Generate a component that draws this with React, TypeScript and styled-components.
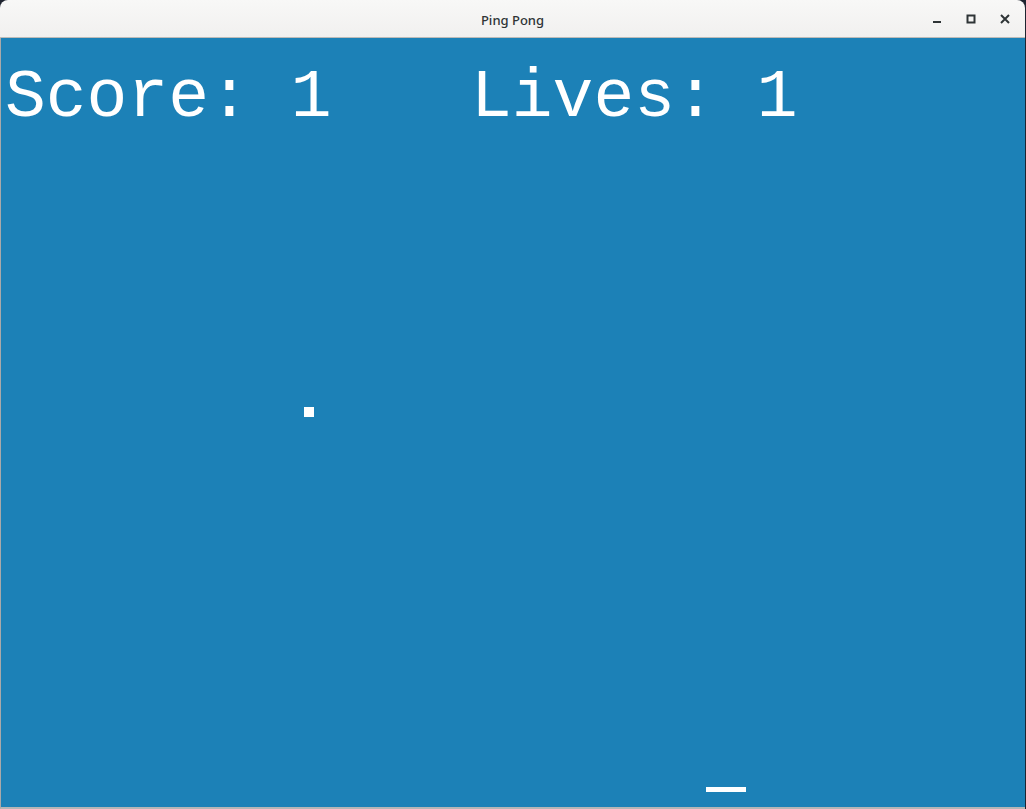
import React from "react";
import styled, { createGlobalStyle } from "styled-components";

const Global = createGlobalStyle`
  html, body { margin: 0; padding: 0; background: #1e2430; overflow: hidden; }
  #root { width: 1026px; height: 809px; }
`;

const Win = styled.div`
  width: 1025px;
  height: 809px;
  display: flex;
  flex-direction: column;
`;

const TitleBar = styled.div`
  height: 38px;
  flex: 0 0 38px;
  box-sizing: border-box;
  background: linear-gradient(#f8f8f7, #f1f0ef);
  border-radius: 8px 8px 0 0;
  border-bottom: 1px solid #bdbbb8;
  position: relative;
  display: flex;
  align-items: center;
  justify-content: center;
`;

const Title = styled.div`
  font-family: "Noto Sans", "DejaVu Sans", sans-serif;
  font-size: 13px;
  font-weight: 500;
  color: #2e3436;
  margin-top: 2px;
`;

const Controls = styled.div`
  position: absolute;
  right: 8px;
  top: 0;
  height: 100%;
  display: flex;
  align-items: center;
  gap: 10px;
`;

const Ctl = styled.div`
  width: 24px;
  height: 24px;
  display: flex;
  align-items: center;
  justify-content: center;
  color: #2e3436;
`;

const Canvas = styled.div`
  flex: 1;
  background: #1c81b7;
  border-left: 1px solid #a9a9a9;
  border-bottom: 2px solid #b6b6b6;
  position: relative;
  overflow: hidden;
`;

const Hud = styled.div`
  font-family: "Liberation Mono", "Courier New", monospace;
  font-size: 68px;
  line-height: 1;
  color: #ffffff;
  white-space: pre;
  padding: 26px 0 0 4px;
  display: flex;
`;

const Stat = styled.span<{ $w: number }>`
  display: inline-block;
  width: ${(p) => p.$w}px;
`;

const Ball = styled.div`
  position: absolute;
  left: 303px;
  top: 369px;
  width: 10px;
  height: 10px;
  background: #fff;
`;

const Paddle = styled.div`
  position: absolute;
  left: 705px;
  top: 749px;
  width: 40px;
  height: 5px;
  background: #fff;
`;

export default function App() {
  return (
    <>
      <Global />
      <Win>
        <TitleBar>
          <Title>Ping Pong</Title>
          <Controls>
            <Ctl>
              <svg width="10" height="10" viewBox="0 0 10 10">
                <rect x="1" y="7" width="8" height="2" fill="currentColor" />
              </svg>
            </Ctl>
            <Ctl>
              <svg width="10" height="10" viewBox="0 0 10 10">
                <rect x="1.5" y="1.5" width="7" height="7" fill="none" stroke="currentColor" strokeWidth="2" />
              </svg>
            </Ctl>
            <Ctl>
              <svg width="10" height="10" viewBox="0 0 10 10">
                <path d="M1 1 L9 9 M9 1 L1 9" stroke="currentColor" strokeWidth="2" />
              </svg>
            </Ctl>
          </Controls>
        </TitleBar>
        <Canvas>
          <Hud>
            <Stat $w={466}>Score: 1</Stat>
            <Stat $w={340}>Lives: 1</Stat>
          </Hud>
          <Ball />
          <Paddle />
        </Canvas>
      </Win>
    </>
  );
}
